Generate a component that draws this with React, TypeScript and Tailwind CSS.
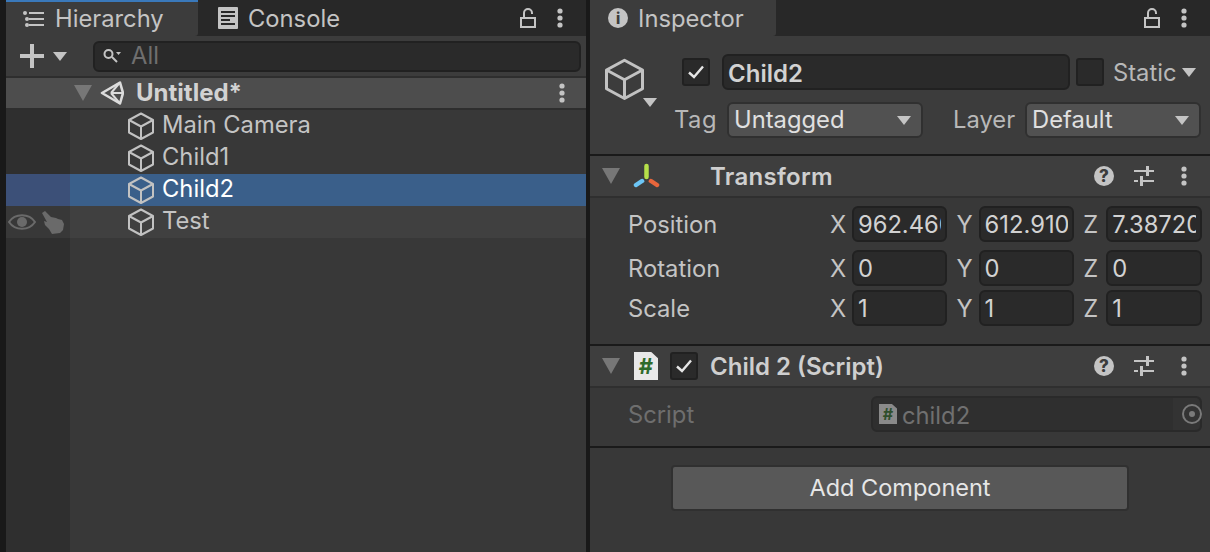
const ARROW = "M0 0h10L5 9z";

function Triangle({ className, color = "#c4c4c4" }: { className: string; color?: string }) {
  return (
    <svg viewBox="0 0 10 9" preserveAspectRatio="none" className={className}>
      <path d={ARROW} fill={color} />
    </svg>
  );
}

function Cube({ className }: { className: string }) {
  return (
    <svg viewBox="0 0 26 28" fill="none" stroke="#c2c2c2" strokeWidth="2" strokeLinejoin="round" className={className}>
      <path d="M13 1.5 25 8v12.5l-12 6.5-12-6.5V8z" />
      <path d="M1 8l12 6.5L25 8M13 14.5V27" />
    </svg>
  );
}

function Kebab({ className = "" }: { className?: string }) {
  return (
    <svg viewBox="0 0 6 20" fill="#c4c4c4" className={`w-[6px] h-[20px] ${className}`}>
      <circle cx="3" cy="3" r="2.6" />
      <circle cx="3" cy="10" r="2.6" />
      <circle cx="3" cy="17" r="2.6" />
    </svg>
  );
}

function Lock() {
  return (
    <svg viewBox="0 0 16 20" fill="none" stroke="#c4c4c4" strokeWidth="2" className="w-[16px] h-[20px]">
      <rect x="1" y="10" width="14" height="9" />
      <path d="M4 10V5a4 4 0 0 1 8 0v1" />
    </svg>
  );
}

function UnityLogo() {
  return (
    <svg viewBox="0 0 24 26" fill="none" stroke="#dcdcdc" strokeWidth="2.6" strokeLinejoin="round" className="w-[24px] h-[26px]">
      <path d="M2 13 20 2.5 23 13 20 23.5z" />
      <path d="M11 13h12M11 13 20 2.5M11 13l9 10.500" strokeWidth="2" />
    </svg>
  );
}

function Sliders() {
  return (
    <svg viewBox="0 0 20 22" fill="#c4c4c4" className="w-[20px] h-[22px]">
      <rect x="0" y="5" width="12" height="2" />
      <rect x="12" y="1" width="3" height="10" />
      <rect x="15" y="5" width="5" height="2" />
      <rect x="0" y="15" width="4" height="2" />
      <rect x="6" y="11" width="3" height="10" />
      <rect x="9" y="15" width="11" height="2" />
    </svg>
  );
}

function Help() {
  return (
    <div className="w-[20px] h-[20px] rounded-full bg-[#c4c4c4] flex items-center justify-center text-[17px] font-extrabold leading-none text-[#3c3c3c]">
      ?
    </div>
  );
}

function Check({ off = false }: { off?: boolean }) {
  return (
    <div className="w-[28px] h-[28px] shrink-0 rounded-[3px] bg-[#2a2a2a] border-2 border-[#212121] flex items-center justify-center">
      {!off && (
        <svg viewBox="0 0 16 14" fill="none" stroke="#e6e6e6" strokeWidth="2.4" className="w-[16px] h-[14px]">
          <path d="M1 7.5 6 12 15 1.5" />
        </svg>
      )}
    </div>
  );
}

function ScriptIcon({ small = false }: { small?: boolean }) {
  return (
    <div
      className={
        small
          ? "w-[18px] h-[20px] shrink-0 [clip-path:polygon(0_0,72%_0,100%_22%,100%_100%,0_100%)] bg-[#8a8a8a] flex items-center justify-center text-[16px] font-bold leading-none text-[#2f4f2c]"
          : "w-[24px] h-[28px] shrink-0 [clip-path:polygon(0_0,72%_0,100%_22%,100%_100%,0_100%)] bg-[#e8e8e8] flex items-center justify-center text-[22px] font-bold leading-none text-[#2f6b2b]"
      }
    >
      #
    </div>
  );
}

function Dropdown({ label, className }: { label: string; className: string }) {
  return (
    <div className={`h-[36px] rounded-[6px] bg-[#515151] border-2 border-[#303030] flex items-center justify-between pl-[5px] pr-[10px] text-[23.75px] text-[#e0e0e0] ${className}`}>
      <span className="leading-none">{label}</span>
      <Triangle className="w-[14px] h-[9px]" />
    </div>
  );
}

function TreeRow({ name, className = "", gutter = "", light = false, children }: { name: string; className?: string; gutter?: string; light?: boolean; children?: React.ReactNode }) {
  return (
    <div className={`h-[32px] flex ${className}`}>
      <div className={`w-[64px] shrink-0 flex items-center ${gutter}`}>{children}</div>
      <div className="pl-[58px] flex items-center gap-[8px]">
        <Cube className="w-[26px] h-[28px]" />
        <span className={`text-[23.75px] leading-none pb-[2px] ${light ? "text-white" : "text-[#c4c4c4]"}`}>{name}</span>
      </div>
    </div>
  );
}

function Axis({ axis, value, last = false }: { axis: string; value: string; last?: boolean }) {
  return (
    <div className="flex items-center w-[128px]">
      <span className={`${last ? "w-[23px]" : "w-[22px]"} text-[23.75px] leading-none pt-[2px] text-[#c4c4c4]`}>{axis}</span>
      <div className={`${last ? "w-[96px]" : "w-[95px]"} h-[36px] rounded-[6px] bg-[#2a2a2a] border-2 border-[#212121] pl-[4px] pr-[4px] flex items-center`}>
        <span className="text-[23.75px] leading-none pt-[2px] text-[#d2d2d2] overflow-hidden whitespace-nowrap">{value}</span>
      </div>
    </div>
  );
}

function VectorRow({ label, values, className = "" }: { label: string; values: string[]; className?: string }) {
  return (
    <div className={`h-[36px] flex items-center pl-[38px] ${className}`}>
      <span className="w-[204px] text-[23.75px] leading-none pt-[2px] text-[#c4c4c4]">{label}</span>
      <Axis axis="X" value={values[0]} />
      <Axis axis="Y" value={values[1]} />
      <Axis axis="Z" value={values[2]} last />
    </div>
  );
}

function ComponentHeader({ children, title, titleClass }: { children: React.ReactNode; title: string; titleClass: string }) {
  return (
    <div className="h-[42px] bg-[#3e3e3e] border-b-2 border-[#2f2f2f] flex items-center">
      <Triangle className="ml-[12px] w-[18px] h-[16px]" color="#777777" />
      {children}
      <span className={`text-[24px] font-semibold leading-none pt-[2px] text-[#cfcfcf] ${titleClass}`}>{title}</span>
      <div className="ml-auto mr-[23px] flex items-center">
        <Help />
        <div className="ml-[20px]">
          <Sliders />
        </div>
        <Kebab className="ml-[27px]" />
      </div>
    </div>
  );
}

export default function App() {
  return (
    <div className="w-[1210px] h-[552px] flex overflow-hidden bg-[#191919] font-['Inter','Liberation_Sans',sans-serif]">
      {/* hierarchy */}
      <div className="w-[580px] ml-[6px] flex flex-col bg-[#383838]">
        <div className="h-[36px] bg-[#282828] flex items-center">
          <div className="w-[192px] h-[36px] bg-[#3c3c3c] border-t-2 border-[#3a79bb] rounded-br-[3px] flex items-center pl-[17px]">
            <svg viewBox="0 0 21 16" fill="#c4c4c4" className="w-[21px] h-[16px]">
              <circle cx="2" cy="2" r="2" />
              <rect x="6" y="1" width="15" height="2" />
              <rect x="6" y="7" width="15" height="2" />
              <circle cx="4" cy="8" r="2" />
              <rect x="6" y="13" width="15" height="2" />
              <circle cx="4" cy="14" r="2" />
            </svg>
            <span className="ml-[11px] text-[23.75px] leading-none text-[#c4c4c4]">Hierarchy</span>
          </div>
          <div className="ml-[20px] flex items-center">
            <svg viewBox="0 0 20 22" className="w-[20px] h-[22px]">
              <rect width="20" height="22" rx="1" fill="#c4c4c4" />
              <path d="M3 5h14M3 9h14M3 13h9M3 17h14" stroke="#282828" strokeWidth="2" />
            </svg>
            <span className="ml-[10px] text-[23.75px] leading-none pt-[2px] text-[#c4c4c4]">Console</span>
          </div>
          <div className="ml-auto mr-[23px] flex items-center gap-[21px]">
            <Lock />
            <Kebab />
          </div>
        </div>
        <div className="h-[40px] bg-[#3c3c3c] flex items-center">
          <svg viewBox="0 0 24 24" fill="#c4c4c4" className="ml-[14px] w-[24px] h-[24px]">
            <rect x="10" y="0" width="4" height="24" />
            <rect x="0" y="10" width="24" height="4" />
          </svg>
          <Triangle className="ml-[9px] w-[14px] h-[9px]" />
          <div className="ml-[26px] w-[488px] h-[31px] rounded-[6px] bg-[#2a2a2a] border-2 border-[#212121] flex items-center pl-[8px]">
            <svg viewBox="0 0 18 16" fill="none" stroke="#c4c4c4" strokeWidth="2" className="w-[18px] h-[16px]">
              <circle cx="5.5" cy="6" r="4" />
              <path d="M9 9l5 5" />
              <path d="M13 4h5l-2.500 3z" fill="#c4c4c4" stroke="none" />
            </svg>
            <span className="ml-[10px] text-[23.75px] leading-none text-[#6f6f6f]">All</span>
          </div>
        </div>
        <div className="h-[34px] mt-0 border-y-2 border-[#2e2e2e] bg-[#4d4d4d] flex items-center">
          <Triangle className="ml-[68px] w-[18px] h-[16px]" color="#777777" />
          <div className="ml-[8px]">
            <UnityLogo />
          </div>
          <span className="ml-[12px] text-[24px] font-bold leading-none text-[#d2d2d2]">Untitled*</span>
          <Kebab className="ml-auto mr-[21px]" />
        </div>
        <div className="flex-1 relative flex flex-col">
          <div className="absolute inset-y-0 left-0 w-[64px] bg-[#2f2f2f]" />
          <div className="relative">
            <TreeRow name="Main Camera" />
            <TreeRow name="Child1" />
            <TreeRow name="Child2" light className="bg-[#3a5f8a]" gutter="bg-[#3c5078]" />
            <TreeRow name="Test" className="bg-[#404040]" gutter="bg-[#383838]">
              <svg viewBox="0 0 28 18" className="ml-[2px] w-[28px] h-[18px]" fill="none" stroke="#6a6a6a" strokeWidth="2">
                <path d="M1 9c6-9 20-9 26 0-6 9-20 9-26 0z" />
                <circle cx="14" cy="9" r="5" fill="#6a6a6a" stroke="none" />
              </svg>
              <svg viewBox="0 0 23 24" className="ml-[5px] w-[23px] h-[24px]" fill="#6a6a6a">
                <path d="M1 3 4 1l6 6 5 1 2 1 4 1 2 4-1 6-3 3-8 1-3-5-4-4-1-4 3 1z" />
              </svg>
            </TreeRow>
          </div>
        </div>
      </div>

      {/* inspector */}
      <div className="w-[620px] ml-[4px] flex flex-col bg-[#383838]">
        <div className="h-[36px] bg-[#282828] flex items-center">
          <div className="w-[186px] h-[36px] bg-[#3c3c3c] rounded-br-[3px] flex items-center pl-[18px]">
            <div className="w-[20px] h-[20px] rounded-full bg-[#c4c4c4] flex items-center justify-center text-[15px] font-extrabold leading-none text-[#3c3c3c]">
              i
            </div>
            <span className="ml-[10px] text-[23.75px] leading-none pt-[2px] text-[#c4c4c4]">Inspector</span>
          </div>
          <div className="ml-auto mr-[23px] flex items-center gap-[21px]">
            <Lock />
            <Kebab />
          </div>
        </div>

        <div className="h-[118px] bg-[#3c3c3c] flex">
          <div className="relative w-[85px] shrink-0 pl-[15px] pt-[22px]">
            <Cube className="w-[39px] h-[42px]" />
            <Triangle className="absolute left-[53px] top-[62px] w-[14px] h-[9px]" />
          </div>
          <div className="flex-1 flex flex-col pt-[18px]">
            <div className="h-[36px] flex items-center">
              <div className="ml-[7px]">
                <Check />
              </div>
              <div className="ml-[12px] w-[348px] h-[36px] rounded-[6px] bg-[#2a2a2a] border-2 border-[#212121] flex items-center pl-[4px] pt-[4px] text-[24px] font-semibold leading-none text-[#d2d2d2]">
                Child2
              </div>
              <div className="ml-[6px]">
                <Check off />
              </div>
              <span className="ml-[9px] text-[23.75px] leading-none pt-[2px] text-[#b8b8b8]">Static</span>
              <Triangle className="ml-[5px] w-[14px] h-[9px]" />
            </div>
            <div className="mt-[12px] flex items-center">
              <span className="-ml-[1px] w-[53px] text-[23.75px] tracking-[0.5px] leading-none text-[#b8b8b8]">Tag</span>
              <Dropdown label="Untagged" className="w-[196px]" />
              <span className="ml-[30px] w-[72px] text-[23.75px] leading-none text-[#b8b8b8]">Layer</span>
              <Dropdown label="Default" className="w-[176px]" />
            </div>
          </div>
        </div>

        <div className="h-[2px] bg-[#1a1a1a]" />
        <ComponentHeader title="Transform" titleClass="ml-[50px] tracking-[0.3px]">
          <svg viewBox="0 0 27 26" className="ml-[13px] w-[27px] h-[26px]" fill="none" strokeWidth="4.500" strokeLinecap="round">
            <path d="M13.500 3v11" stroke="#b6e04a" />
            <path d="M9 18l-6 4" stroke="#6cc5f5" />
            <path d="M18 18l6 4" stroke="#e8663c" />
          </svg>
        </ComponentHeader>
        <div className="h-[146px] pt-[8px]">
          <VectorRow label="Position" values={["962.4600", "612.9100", "7.38720"]} />
          <VectorRow label="Rotation" values={["0", "0", "0"]} className="mt-[8px]" />
          <VectorRow label="Scale" values={["1", "1", "1"]} className="mt-[4px]" />
        </div>

        <div className="h-[2px] bg-[#1a1a1a]" />
        <ComponentHeader title="Child 2 (Script)" titleClass="ml-[12px]">
          <div className="ml-[14px]">
            <ScriptIcon />
          </div>
          <div className="ml-[12px]">
            <Check />
          </div>
        </ComponentHeader>
        <div className="h-[58px] flex items-start pt-[8px] pl-[38px]">
          <div className="w-[243px] h-[36px] pt-[2px] flex items-center text-[23.75px] leading-none text-[#6e6e6e]">Script</div>
          <div className="w-[331px] h-[36px] rounded-[6px] bg-[#2f2f2f] border-2 border-[#2a2a2a] flex items-center pl-[6px]">
            <ScriptIcon small />
            <span className="ml-[5px] text-[23.75px] leading-none pt-[4px] text-[#707070]">child2</span>
            <div className="ml-auto w-[27px] h-[32px] rounded-r-[5px] bg-[#333333] flex items-center justify-end">
              <div className="-mr-[2px] w-[20px] h-[20px] rounded-full border-2 border-[#7a7a7a] flex items-center justify-center">
                <div className="w-[6px] h-[6px] rounded-full bg-[#7a7a7a]" />
              </div>
            </div>
          </div>
        </div>
        <div className="h-[2px] bg-[#1a1a1a]" />
        <div className="pl-[81px] pt-[17px]">
          <div className="w-[458px] h-[46px] rounded-[4px] bg-[#585858] border-2 border-[#303030] flex items-center justify-center text-[23.5px] leading-none text-[#e6e6e6]">
            Add Component
          </div>
        </div>
      </div>
    </div>
  );
}
